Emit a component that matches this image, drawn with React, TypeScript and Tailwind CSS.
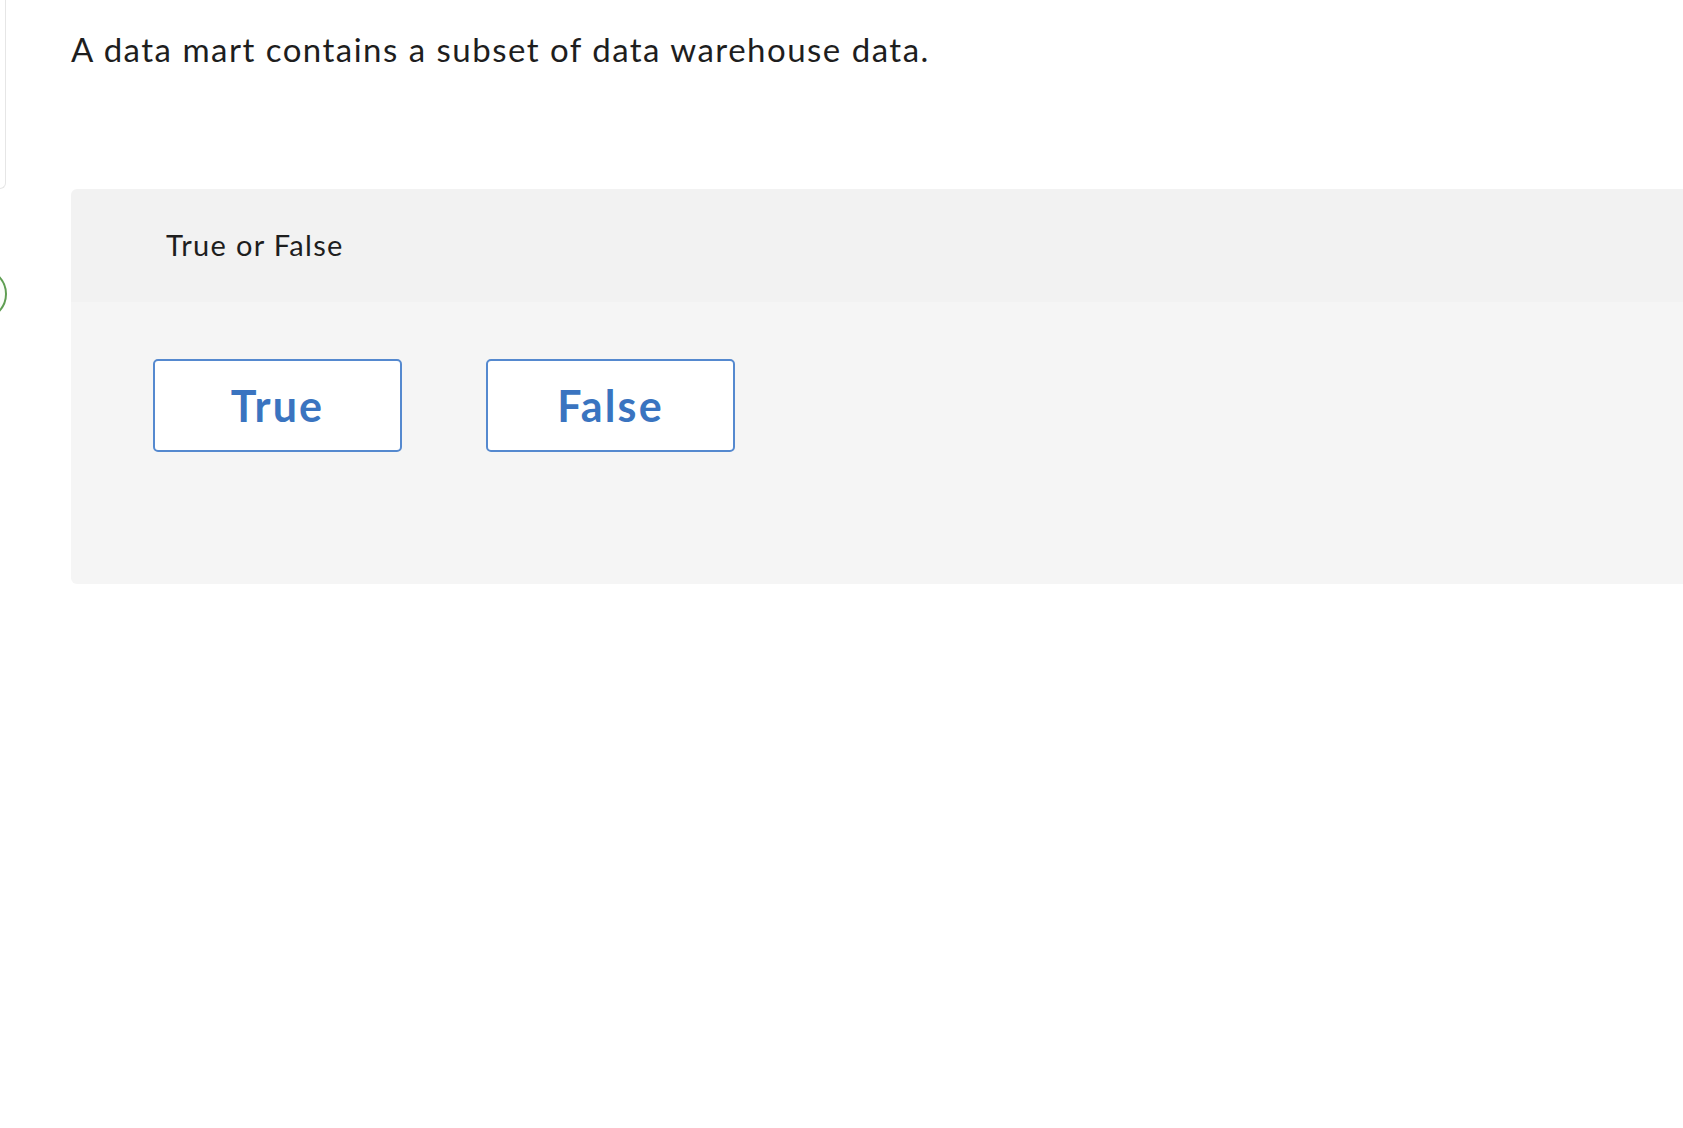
import React from 'react'

const font = { fontFamily: 'Lato, "Noto Sans", sans-serif' }

function AnswerButton({ label }: { label: string }) {
  return (
    <button
      type="button"
      className="w-[249px] h-[93px] rounded-[5px] border-2 border-[#5589cf] bg-white text-[43px] font-bold tracking-[0.05em] text-[#3a74c0] leading-none"
    >
      {label}
    </button>
  )
}

export default function App() {
  return (
    <div className="min-h-screen bg-white flex text-[#1e1e1e]" style={font}>
      {/* left rail: edge of previous panel and a status dot */}
      <div className="w-[7px] shrink-0 flex flex-col overflow-hidden">
        <div className="w-[6px] h-[189px] border-r border-b border-[#e6e6e6] rounded-br-[8px]" />
        <div className="mt-[79px] w-[52px] h-[52px] ml-[-45px] rounded-full border-2 border-[#5f9e52] bg-[#fafdf9]" />
      </div>

      <div className="flex-1 ml-[64px]">
        <p className="pt-[29px] text-[33px] leading-[40px] tracking-[0.045em]">
          A data mart contains a subset of data warehouse data.
        </p>

        <div className="mt-[120px] rounded-l-[6px] overflow-hidden">
          <div className="h-[113px] bg-[#f2f2f2] flex items-center pl-[95px]">
            <span className="text-[29px] tracking-[0.045em] -mt-[2px]">True or False</span>
          </div>
          <div className="h-[282px] bg-[#f5f5f5] pt-[57px] pl-[82px] flex items-start gap-[84px]">
            <AnswerButton label="True" />
            <AnswerButton label="False" />
          </div>
        </div>
      </div>
    </div>
  )
}
